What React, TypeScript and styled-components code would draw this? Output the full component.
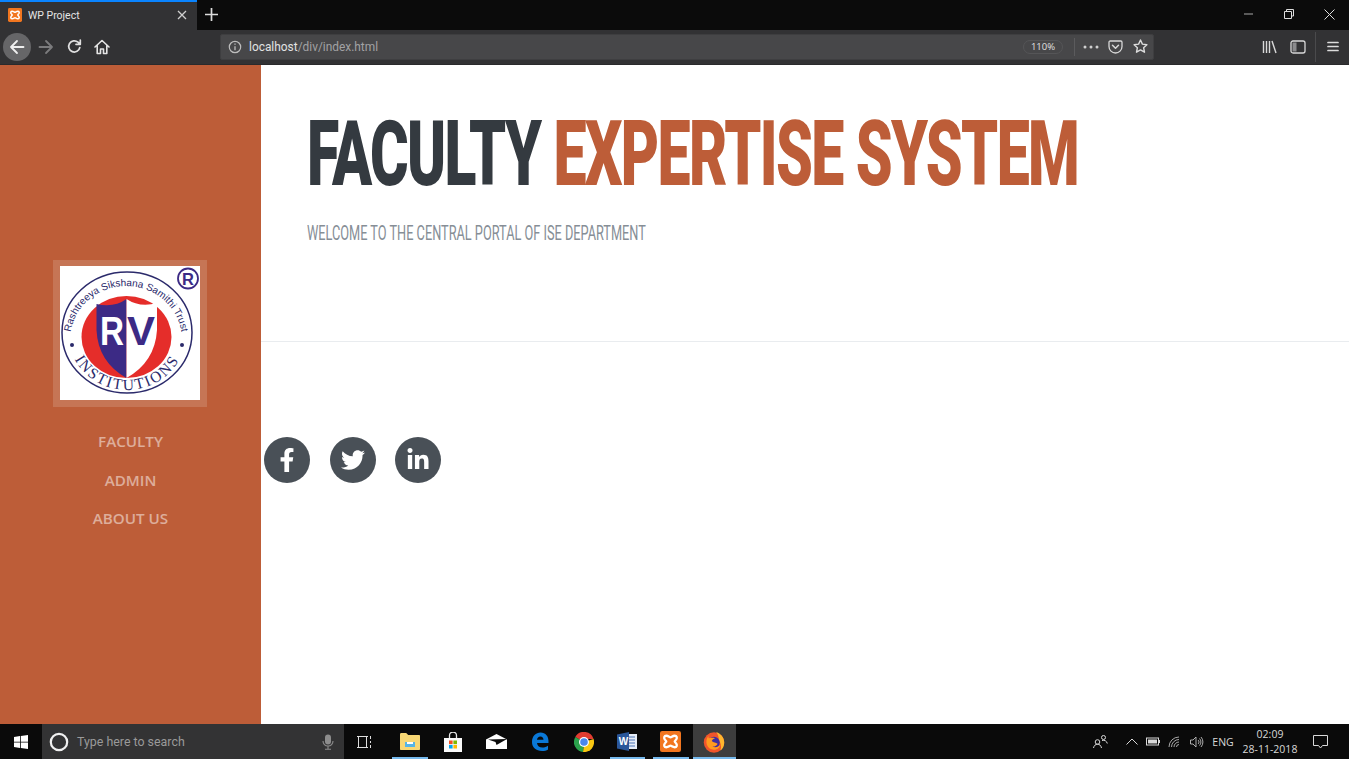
import React from "react";
import styled, { createGlobalStyle } from "styled-components";
import { FaFacebookF, FaTwitter, FaLinkedinIn } from "react-icons/fa";

const Global = createGlobalStyle`
  html, body { margin: 0; padding: 0; height: 100%; overflow: hidden; background: #fff; }
  #root { height: 100%; }
`;

const Screen = styled.div`
  width: 1349px; height: 759px; display: flex; flex-direction: column;
  font-family: "Open Sans", "Liberation Sans", sans-serif; overflow: hidden;
`;
const TabStrip = styled.div`
  height: 30px; background: #0b0b0b; display: flex; align-items: stretch; flex: none;
`;
const Tab = styled.div`
  width: 197px; box-sizing: border-box; background: #323234; border-top: 2px solid #0a84ff;
  display: flex; align-items: center; padding: 0 9px 2px 8px; gap: 6px; color: #e4e4e4;
  font-family: Roboto, sans-serif; font-size: 10.5px;
`;
const TabTitle = styled.span`flex: 1; white-space: nowrap;`;
const NewTab = styled.div`
  width: 29px; display: flex; align-items: center; justify-content: center; padding-bottom: 2px;
`;
const WindowControls = styled.div`
  margin-left: auto; display: flex; align-items: center; padding-bottom: 2px;
`;
const WinBtn = styled.div`
  width: 40px; display: flex; align-items: center; justify-content: center;
`;
const ToolBar = styled.div`
  height: 35px; box-sizing: border-box; background: #323234; display: flex; align-items: center; flex: none;
  padding: 0 0 2px 3px; box-shadow: inset 0 -1px 0 #2a2a2c;
`;
const NavBtn = styled.div<{ $w?: number; $active?: boolean }>`
  width: ${(p) => p.$w ?? 28}px; height: 28px; flex: none; display: flex; align-items: center; justify-content: center;
  ${(p) => (p.$active ? "background:#666668;border-radius:50%;" : "")}
`;
const UrlBar = styled.div`
  margin-left: 103px; width: 934px; height: 26px; box-sizing: border-box; background: #474749; border-radius: 2px;
  border: 1px solid #3e3e40; display: flex; align-items: center; padding-left: 7px; flex: none;
`;
const Url = styled.span`
  margin-left: 7px; font-family: Roboto, sans-serif; font-size: 11.9px; color: #e2e2e2; white-space: nowrap; flex: 1;
  span { color: #a2a2a4; }
`;
const ZoomPill = styled.span`
  width: 40px; height: 14px; border: 1px solid #555557; border-radius: 8px; font-size: 9.5px; color: #e0e0e0;
  display: flex; align-items: center; justify-content: center; box-sizing: border-box; margin-right: 8px;
`;
const Sep = styled.span<{ $h: number; $c: string }>`
  width: 1px; height: ${(p) => p.$h}px; background: ${(p) => p.$c}; flex: none; margin: 0 3px;
`;
const UrlIcon = styled.div`
  width: 25px; display: flex; align-items: center; justify-content: center; flex: none;
`;
const ToolRight = styled.div`
  margin-left: auto; display: flex; align-items: center; padding-right: 3px;
`;

const Page = styled.div`flex: 1; display: flex; min-height: 0; background: #fff;`;
const Side = styled.aside`
  width: 261px; flex: none; background: #bd5d38; display: flex; flex-direction: column; align-items: center;
  padding-top: 195px; box-sizing: border-box;
`;
const LogoFrame = styled.div`
  width: 154px; height: 147px; box-sizing: border-box; padding: 6px 7px 7px; background: rgba(255,255,255,.15);
  margin-right: 1px;
  svg { display: block; }
`;
const SideNav = styled.nav`
  display: flex; flex-direction: column; align-items: center; gap: 16px; margin-top: 23px;
`;
const SideLink = styled.a`
  font-size: 15.2px; line-height: 22.5px; font-weight: 600; color: rgba(255,255,255,.5); text-transform: uppercase;
`;
const Main = styled.main`flex: 1; min-width: 0; display: flex; flex-direction: column;`;
const Header = styled.header`
  height: 277px; box-sizing: border-box; padding: 44px 0 0 46px; border-bottom: 1px solid #e9ecef; flex: none;
`;
const Title = styled.h1`
  margin: 0; font-family: Roboto, "Liberation Sans", sans-serif; font-weight: 900; font-size: 90px; line-height: 92px;
  color: #343a40; white-space: nowrap; text-transform: uppercase; display: inline-block; letter-spacing: -2.5px;
  transform: scaleX(0.655); transform-origin: left center;
  span { color: #bd5d38; }
`;
const Sub = styled.p`
  margin: 20px 0 0; font-family: Roboto, "Liberation Sans", sans-serif; font-weight: 400; font-size: 21px; line-height: 24px;
  color: #868e96; text-transform: uppercase; white-space: nowrap; width: fit-content;
  transform: scaleX(0.607); transform-origin: left center;
`;
const Socials = styled.div`display: flex; gap: 19.5px; margin: 95px 0 0 3px;`;
const Social = styled.a`
  width: 46px; height: 46px; border-radius: 50%; background: #495057; color: #fff; font-size: 24px;
  display: flex; align-items: center; justify-content: center;
`;

const TaskBar = styled.footer`
  height: 35px; background: #0a0a0a; flex: none; display: flex; align-items: stretch; color: #d8d8d8;
`;
const StartBtn = styled.div`
  width: 42px; display: flex; align-items: center; justify-content: center; flex: none;
`;
const Search = styled.div`
  width: 302px; background: #333334; display: flex; align-items: center; padding: 0 10px 0 7px; box-sizing: border-box; flex: none;
`;
const SearchText = styled.span`
  margin-left: 8px; flex: 1; font-family: Roboto, sans-serif; font-size: 12.4px; color: #9a9a9a; white-space: nowrap;
`;
const AppCell = styled.div<{ $w?: number; $open?: boolean; $active?: boolean }>`
  width: ${(p) => p.$w ?? 43.5}px; flex: none; display: flex; align-items: center; justify-content: center; position: relative;
  ${(p) => (p.$active ? "background:#3d3d3d;" : "")}
  ${(p) => (p.$open ? `&::after{content:"";position:absolute;left:${p.$active ? 0 : 4}px;right:${p.$active ? 0 : 4}px;bottom:0;height:2px;background:#76b9ed;}` : "")}
`;
const TaskViewCell = styled(AppCell)`padding-right: 4px; box-sizing: border-box;`;
const Tray = styled.div`margin-left: auto; display: flex; align-items: stretch;`;
const TrayCell = styled.div<{ $w: number }>`
  width: ${(p) => p.$w}px; flex: none; display: flex; align-items: center; justify-content: center; font-size: 10.5px; color: #d8d8d8;
`;
const Clock = styled.div`
  width: 62px; flex: none; display: flex; flex-direction: column; align-items: center; justify-content: center;
  font-size: 10.5px; line-height: 15px; color: #d8d8d8; white-space: nowrap;
`;

const XamppIcon = ({ s = 14 }: { s?: number }) => (
  <svg width={s} height={s} viewBox="0 0 20 20">
    <rect width="20" height="20" rx="2" fill="#f2761f" />
    <path d="M6 4.500c2 0 3 1.500 4 1.500s2-1.500 4-1.500 2.500 2 1.500 3.500c-.7 1-1.500 1.500-1.500 2s.8 1 1.500 2c1 1.500.5 3.500-1.500 3.500s-3-1.500-4-1.500-2 1.500-4 1.500-2.500-2-1.500-3.500c.7-1 1.500-1.500 1.500-2s-.8-1-1.500-2C3.500 6.500 4 4.500 6 4.500z" fill="none" stroke="#fff" strokeWidth="2.200" />
  </svg>
);

const Logo = () => (
  <svg width="140" height="134" viewBox="0 0 140 134">
    <rect width="140" height="134" fill="#fff" />
    <defs>
      <path id="arcTop" d="M 10 74 A 56 54 0 0 1 122 74" />
      <path id="arcBottom" d="M 8 67 A 59 57 0 0 0 126 67" />
    </defs>
    <ellipse cx="67" cy="66.500" rx="65" ry="60.500" fill="none" stroke="#2b2a6b" strokeWidth="1.500" />
    <ellipse cx="66.500" cy="71" rx="45" ry="41" fill="#e52d2a" />
    <path d="M36.500 38 Q 54 42 66.500 33 L 66.500 112 Q 38 96 36.500 64 Z" fill="#3c2a85" />
    <path d="M66.500 33 Q 80 42 97 37 L 97 64 Q 95 96 66.500 112 Z" fill="#fff" />
    <text x="40" y="79" fontFamily="Liberation Sans" fontWeight="700" fontSize="41" fill="#fff" textLength="24" lengthAdjust="spacingAndGlyphs">R</text>
    <text x="67" y="79" fontFamily="Liberation Sans" fontWeight="700" fontSize="41" fill="#3c2a85" textLength="28" lengthAdjust="spacingAndGlyphs">V</text>
    <text fontFamily="Liberation Sans" fontSize="10" fill="#2b2a6b">
      <textPath href="#arcTop" startOffset="50%" textAnchor="middle">Rashtreeya Sikshana Samithi Trust</textPath>
    </text>
    <text fontFamily="Liberation Serif" fontSize="15.500" fill="#2b2a6b" letterSpacing="1.800">
      <textPath href="#arcBottom" startOffset="50%" textAnchor="middle">INSTITUTIONS</textPath>
    </text>
    <circle cx="12" cy="79" r="2" fill="#2b2a6b" />
    <circle cx="122" cy="79" r="2" fill="#2b2a6b" />
    <circle cx="128" cy="12.500" r="10" fill="#fff" stroke="#3c2a85" strokeWidth="1.800" />
    <text x="128" y="18.500" textAnchor="middle" fontFamily="Liberation Sans" fontWeight="700" fontSize="16.500" fill="#3c2a85">R</text>
  </svg>
);

const stroke = { fill: "none", strokeLinecap: "round" as const, strokeLinejoin: "round" as const };

export default function App() {
  return (
    <Screen>
      <Global />
      <TabStrip>
        <Tab>
          <XamppIcon />
          <TabTitle>WP Project</TabTitle>
          <svg width="12" height="12" viewBox="0 0 12 12"><path d="M2 2l8 8M10 2l-8 8" stroke="#d0d0d0" strokeWidth="1.300" /></svg>
        </Tab>
        <NewTab>
          <svg width="13" height="13" viewBox="0 0 13 13"><path d="M6.500 0v13M0 6.500h13" stroke="#dcdcdc" strokeWidth="1.700" /></svg>
        </NewTab>
        <WindowControls>
          <WinBtn><svg width="10" height="10" viewBox="0 0 10 10"><path d="M0 5h9" stroke="#aaa" strokeWidth="1" /></svg></WinBtn>
          <WinBtn><svg width="10" height="10" viewBox="0 0 10 10"><path d="M2.500 2.500V.5h7v6.500H7.500M.5 2.500h7v7h-7z" fill="none" stroke="#ddd" strokeWidth="1" /></svg></WinBtn>
          <WinBtn><svg width="11" height="11" viewBox="0 0 11 11"><path d="M.5.500l10 10M10.500.500l-10 10" stroke="#ddd" strokeWidth="1" /></svg></WinBtn>
        </WindowControls>
      </TabStrip>
      <ToolBar>
        <NavBtn $active>
          <svg width="16" height="16" viewBox="0 0 16 16"><path d="M14.500 8H2M8 2L2 8l6 6" {...stroke} stroke="#efefef" strokeWidth="1.800" /></svg>
        </NavBtn>
        <NavBtn $w={30}>
          <svg width="16" height="16" viewBox="0 0 16 16"><path d="M1.500 8H14M8 2l6 6-6 6" {...stroke} stroke="#7b7b7d" strokeWidth="1.800" /></svg>
        </NavBtn>
        <NavBtn $w={26}>
          <svg width="15" height="15" viewBox="0 0 15 15"><path d="M12.800 8.500A5.600 5.600 0 1 1 11 3.200L13 5M13.300 1v4.300H9" {...stroke} stroke="#e0e0e0" strokeWidth="1.700" /></svg>
        </NavBtn>
        <NavBtn $w={30}>
          <svg width="16" height="16" viewBox="0 0 16 16"><path d="M1 8l7-6.500L15 8M3.200 6.500V14.500H6.500V10h3v4.500h3.300V6.500" {...stroke} stroke="#e4e4e4" strokeWidth="1.600" /></svg>
        </NavBtn>
        <UrlBar>
          <svg width="14" height="14" viewBox="0 0 14 14"><circle cx="7" cy="7" r="5.700" fill="none" stroke="#bdbdbd" strokeWidth="1.200" /><path d="M7 6.200v4M7 3.600v1.200" stroke="#bdbdbd" strokeWidth="1.300" /></svg>
          <Url>localhost<span>/div/index.html</span></Url>
          <ZoomPill>110%</ZoomPill>
          <Sep $h={18} $c="#5b5b5d" />
          <UrlIcon>
            <svg width="16" height="4" viewBox="0 0 16 4"><circle cx="2" cy="2" r="1.500" fill="#d0d0d0" /><circle cx="8" cy="2" r="1.500" fill="#d0d0d0" /><circle cx="14" cy="2" r="1.500" fill="#d0d0d0" /></svg>
          </UrlIcon>
          <UrlIcon>
            <svg width="15" height="14" viewBox="0 0 15 14"><path d="M1 2.200c0-.7.500-1.200 1.200-1.200h10.600c.7 0 1.200.5 1.200 1.200v4.300c0 3.600-3 6.500-6.500 6.500S1 10.100 1 6.500z" {...stroke} stroke="#d8d8d8" strokeWidth="1.300" /><path d="M4.500 5.200l3 3 3-3" {...stroke} stroke="#d8d8d8" strokeWidth="1.500" /></svg>
          </UrlIcon>
          <UrlIcon>
            <svg width="15" height="15" viewBox="0 0 15 15"><path d="M7.500 1l1.900 4.100 4.500.6-3.300 3 .9 4.500-4-2.300-4 2.300.9-4.500-3.300-3 4.500-.6z" {...stroke} stroke="#dcdcdc" strokeWidth="1.400" /></svg>
          </UrlIcon>
        </UrlBar>
        <ToolRight>
          <NavBtn>
            <svg width="16" height="14" viewBox="0 0 16 14"><path d="M1.500 1v12M4.500 1v12M7.500 1v12M10 1l4 12" stroke="#d8d8d8" strokeWidth="1.400" fill="none" /></svg>
          </NavBtn>
          <NavBtn>
            <svg width="16" height="14" viewBox="0 0 16 14"><rect x="1" y="1" width="14" height="12" rx="2" fill="none" stroke="#d8d8d8" strokeWidth="1.300" /><rect x="2.500" y="2.500" width="4" height="9" fill="#8a8a8c" /></svg>
          </NavBtn>
          <Sep $h={30} $c="#4a4a4c" />
          <NavBtn $w={27}>
            <svg width="12" height="11" viewBox="0 0 12 11"><path d="M1 1.500h10M1 5.500h10M1 9.500h10" stroke="#dcdcdc" strokeWidth="1.700" strokeLinecap="round" /></svg>
          </NavBtn>
        </ToolRight>
      </ToolBar>
      <Page>
        <Side>
          <LogoFrame><Logo /></LogoFrame>
          <SideNav>
            <SideLink>Faculty</SideLink>
            <SideLink>Admin</SideLink>
            <SideLink>About Us</SideLink>
          </SideNav>
        </Side>
        <Main>
          <Header>
            <Title>Faculty <span>Expertise System</span></Title>
            <Sub>Welcome to the central portal of ISE department</Sub>
          </Header>
          <Socials>
            <Social><FaFacebookF /></Social>
            <Social><FaTwitter /></Social>
            <Social><FaLinkedinIn /></Social>
          </Socials>
        </Main>
      </Page>
      <TaskBar>
        <StartBtn>
          <svg width="14" height="14" viewBox="0 0 14 14"><path d="M0 2l6-.9V6.700H0zM6.800 1L14 0v6.700H6.800zM0 7.400h6v5.500L0 12zM6.800 7.400H14V14l-7.200-1z" fill="#fff" /></svg>
        </StartBtn>
        <Search>
          <svg width="20" height="20" viewBox="0 0 20 20"><circle cx="10" cy="10" r="8.200" fill="none" stroke="#f0f0f0" strokeWidth="2.200" /></svg>
          <SearchText>Type here to search</SearchText>
          <svg width="12" height="16" viewBox="0 0 12 16"><rect x="3" y="0.500" width="6" height="10" rx="3" fill="#8d8d8d" /><path d="M1 7c0 3 2 5 5 5s5-2 5-5M6 12v3M3 15.300h6" fill="none" stroke="#8d8d8d" strokeWidth="1.100" /></svg>
        </Search>
        <TaskViewCell $w={44}>
          <svg width="15" height="14" viewBox="0 0 15 14"><path d="M0 1.500h11M0 12.500h11M1.500 1.500v11M9.500 1.500v11M13.500 1v3M13.500 6v2M13.500 10v3" stroke="#dedede" strokeWidth="1" fill="none" /></svg>
        </TaskViewCell>
        <AppCell $open>
          <svg width="20" height="17" viewBox="0 0 20 17"><path d="M0 1.500c0-.8.500-1.500 1.200-1.500h5l2 2H19c.6 0 1 .4 1 1v13c0 .6-.4 1-1 1H1c-.6 0-1-.4-1-1z" fill="#f7d774" /><path d="M5 9h10v5H5z" fill="#55b4e6" /><path d="M7 9h6v2H7z" fill="#fff" /></svg>
        </AppCell>
        <AppCell>
          <svg width="20" height="20" viewBox="0 0 20 20"><path d="M1 6h18v14H1z" fill="#fafafa" /><path d="M6.500 6V3.500a3.500 3.500 0 0 1 7 0V6" fill="none" stroke="#e8e8e8" strokeWidth="1.300" /><rect x="6" y="8.500" width="3.600" height="3.600" fill="#f25022" /><rect x="10.400" y="8.500" width="3.600" height="3.600" fill="#7fba00" /><rect x="6" y="12.900" width="3.600" height="3.600" fill="#00a4ef" /><rect x="10.400" y="12.900" width="3.600" height="3.600" fill="#ffb900" /></svg>
        </AppCell>
        <AppCell>
          <svg width="21" height="15" viewBox="0 0 21 15"><path d="M0 5.500L10.500 0 21 5.500V15H0z" fill="#fff" /><path d="M2 5.500L21 5 10.500 11 9.500 8z" fill="#0a0a0a" /></svg>
        </AppCell>
        <AppCell>
          <svg width="18" height="19" viewBox="0 0 18 19"><path d="M1 10C1 4 5 .5 9.500.5 14.500.5 18 4 17.500 11H6c.3 3 2.500 4.500 5.500 4.500 2 0 4-.7 5.500-1.800v3.800c-1.500 1-3.500 1.500-6 1.500C5 19 1 15.500 1 10zM6 7.800h6.500c0-2-1.200-3.300-3.100-3.300S6.200 5.800 6 7.800z" fill="#0a78d7" /></svg>
        </AppCell>
        <AppCell>
          <svg width="20" height="20" viewBox="0 0 20 20"><path d="M10 10L1.300 5A10 10 0 0 1 19.600 7H10z" fill="#e23c31" /><path d="M19.600 7A10 10 0 0 1 9 20l1-10z" fill="#f9c712" /><path d="M9 20A10 10 0 0 1 1.300 5L10 10z" fill="#2ba24c" /><circle cx="10" cy="10" r="5" fill="#fff" /><circle cx="10" cy="10" r="3.800" fill="#4a87ee" /></svg>
        </AppCell>
        <AppCell $open>
          <svg width="20" height="19" viewBox="0 0 20 19"><rect x="9" y="2" width="11" height="15" fill="#e6ecf6" /><path d="M12 5h6M12 8h6M12 11h6M12 14h6" stroke="#4a73b5" strokeWidth="1" /><path d="M0 2.500L12 0v19L0 16.500z" fill="#2b579a" /><text x="1.800" y="13" fontFamily="Liberation Sans" fontWeight="700" fontSize="10" fill="#fff">W</text></svg>
        </AppCell>
        <AppCell $open>
          <XamppIcon s={21} />
        </AppCell>
        <AppCell $open $active>
          <svg width="22" height="22" viewBox="0 0 20 20"><circle cx="10" cy="10.500" r="9.300" fill="#f0552b" /><path d="M12 .8c4.500 1.500 7.500 5.500 7.300 10-.1 3-1.500 5.500-3.500 7 1.300-3.500.6-7-1.500-9.500.2-3-.7-5.500-2.300-7.500z" fill="#ffb62e" /><circle cx="10" cy="10.500" r="5.200" fill="#3f2e9e" /><path d="M5 4.500c-1.800 2-2.500 5-1.500 8 1 2.800 3.500 4.500 6.500 4.500 3 0 5.500-2 6-5-1.500 2.500-5 3.500-7.500 2 2 .3 4-.6 4.800-2.500-1.500-1.300-4-1-5.300-2.500.5-1.300 1.500-2 3-2.500-2-.7-4.300-.5-6 0z" fill="#ff9a1f" /></svg>
        </AppCell>
        <Tray>
          <TrayCell $w={20}>
            <svg width="15" height="15" viewBox="0 0 15 15"><circle cx="4.500" cy="8" r="2.300" fill="none" stroke="#d8d8d8" /><path d="M.5 14c.5-2.500 2-3.800 4-3.800s3.500 1.300 4 3.800" fill="none" stroke="#d8d8d8" /><circle cx="10.500" cy="3.500" r="2" fill="none" stroke="#d8d8d8" /><path d="M9 6.500c2.500-.7 4.800.5 5.300 3" fill="none" stroke="#d8d8d8" /></svg>
          </TrayCell>
          <TrayCell $w={11} />
          <TrayCell $w={21}>
            <svg width="12" height="7" viewBox="0 0 12 7"><path d="M.5 6.500L6 1l5.500 5.500" fill="none" stroke="#d8d8d8" /></svg>
          </TrayCell>
          <TrayCell $w={22}>
            <svg width="14" height="9" viewBox="0 0 14 9"><rect x=".5" y="1" width="12" height="7" fill="none" stroke="#d8d8d8" /><rect x="2" y="2.500" width="9" height="4" fill="#d8d8d8" /><rect x="13" y="3" width="1" height="3" fill="#d8d8d8" /></svg>
          </TrayCell>
          <TrayCell $w={22}>
            <svg width="14" height="12" viewBox="0 0 14 12"><path d="M1 11a10 10 0 0 1 10-10M3.500 11a7.500 7.500 0 0 1 7.500-7.500M6 11a5 5 0 0 1 5-5M8.500 11a2.500 2.500 0 0 1 2.500-2.500" fill="none" stroke="#b8b8b8" strokeWidth=".9" /></svg>
          </TrayCell>
          <TrayCell $w={21}>
            <svg width="14" height="12" viewBox="0 0 14 12"><path d="M.5 4h2.500L6 1v10L3 8H.5zM8 4a2.500 2.500 0 0 1 0 4M9.500 2.500a5 5 0 0 1 0 7M11 1a7.500 7.500 0 0 1 0 10" fill="none" stroke="#bdbdbd" strokeWidth=".9" /></svg>
          </TrayCell>
          <TrayCell $w={32}>ENG</TrayCell>
          <Clock><span>02:09</span><span>28-11-2018</span></Clock>
          <TrayCell $w={38}>
            <svg width="15" height="14" viewBox="0 0 15 14"><path d="M.5.500h14v10H9.500L7.500 13l-2-2.500h-5z" fill="none" stroke="#d8d8d8" /></svg>
          </TrayCell>
          <TrayCell $w={10} />
        </Tray>
      </TaskBar>
    </Screen>
  );
}
